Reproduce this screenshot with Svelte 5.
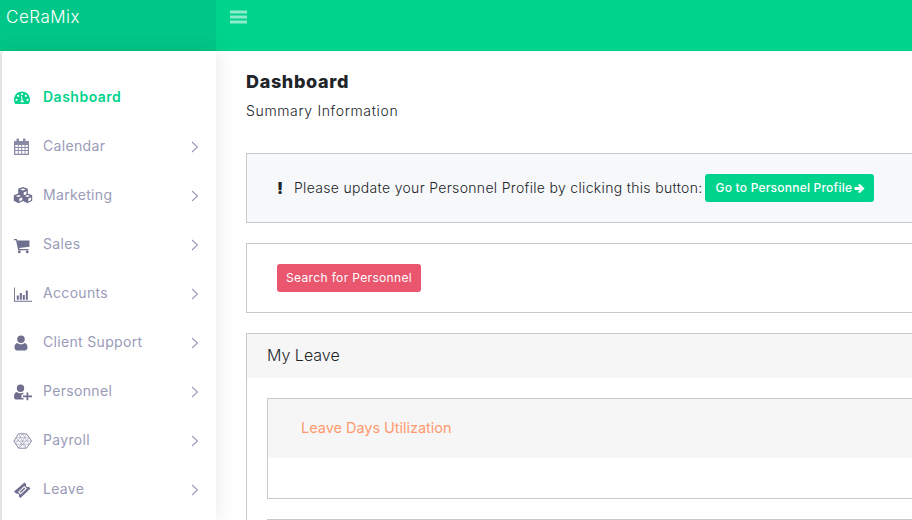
<script>
  const items = [
    { label: 'Calendar', icon: 'calendar' },
    { label: 'Marketing', icon: 'cubes' },
    { label: 'Sales', icon: 'cart' },
    { label: 'Accounts', icon: 'chart' },
    { label: 'Client Support', icon: 'user' },
    { label: 'Personnel', icon: 'userplus' },
    { label: 'Payroll', icon: 'hex' },
    { label: 'Leave', icon: 'ticket' }
  ];
</script>

<div class="page">
  <header class="topbar">
    <div class="brand">CeRaMix</div>
    <div class="toggle">
      <svg width="17" height="14" viewBox="0 0 17 14"><path d="M0 0.5h17v3H0zM0 5.500h17v3H0zM0 10.500h17v3H0z" fill="#fff" fill-opacity=".55"/></svg>
    </div>
  </header>
  <div class="body">
    <aside class="sidebar">
      <nav>
        <a class="item active" href="#dashboard">
          <svg class="ico" viewBox="0 0 20 18"><path fill-rule="evenodd" fill="#00d38c" d="M9 2.500C4.600 2.500 1 6.100 1 10.500c0 1.500.4 2.900 1.100 4.200.2.300.4.300.6.300h12.600c.2 0 .5-.1.600-.3.700-1.300 1.100-2.700 1.100-4.200 0-4.400-3.600-8-8-8zM9 4a1.100 1.100 0 1 1 0 2.200A1.100 1.100 0 0 1 9 4zM5.200 5.800a1.100 1.100 0 1 1 0 2.200 1.100 1.100 0 0 1 0-2.200zm7.600 0a1.100 1.100 0 1 1 0 2.200 1.100 1.100 0 0 1 0-2.200zM3.500 9.700a1.100 1.100 0 1 1 0 2.200 1.100 1.100 0 0 1 0-2.200zm11 0a1.100 1.100 0 1 1 0 2.200 1.100 1.100 0 0 1 0-2.200zM7.900 7.300l.9-.2 1 4.500c.7.300 1.200 1 1.200 1.700H7.200c0-.9.600-1.700 1.500-1.900z"/></svg>
          <span>Dashboard</span>
        </a>
        {#each items as item}
          <a class="item" href="#{item.icon}">
            <svg class="ico" class:soft={item.icon === 'calendar'} viewBox="0 0 20 18">
              {#if item.icon === 'calendar'}
                <path fill-rule="evenodd" d="M1 3h2.500V1c0-.8 2.500-.8 2.500 0v2h4V1c0-.8 2.500-.8 2.500 0v2H16v14H1zM2.300 7v2h2.500V7zm3.400 0v2h2.500V7zm3.400 0v2h2.500V7zm3.400 0v2h2.300V7zM2.300 10v2h2.500v-2zm3.400 0v2h2.500v-2zm3.400 0v2h2.500v-2zm3.400 0v2h2.300v-2zM2.300 13v2.700h2.500V13zm3.400 0v2.700h2.500V13zm3.400 0v2.700h2.500V13zm3.400 0v2.700h2.300V13z"/>
              {:else if item.icon === 'cubes'}
                <path fill-rule="evenodd" d="M10 0l4.800 1.800v4.700l4.400 1.700v5.600L14.500 16.200 10 14l-4.500 2.200L.8 13.800V8.200l4.400-1.700V1.800zM10 1.600L7.300 2.600 10 3.600l2.700-1zM5.500 8l-2.700 1 2.700 1 2.700-1zm9 0l-2.700 1 2.700 1 2.700-1zM6.300 11.500v3l3-1.500v-2.600zm9 0v3l2.800-1.400v-2.700zM10.700 5.300v3l2.800-1.100V4.200z"/>
              {:else if item.icon === 'cart'}
                <path fill-rule="evenodd" d="M1 3h2.800l.5 1.500H16.500V10.700L6.300 12l.2 1H15.500v1.300H5.200L3 4.300H1zM6.300 14.500a1.400 1.400 0 1 1 0 2.800 1.400 1.400 0 0 1 0-2.800zm8 0a1.400 1.400 0 1 1 0 2.800 1.400 1.400 0 0 1 0-2.800z"/>
              {:else if item.icon === 'chart'}
                <path d="M1 2.500h.9v13.300H19v1H1zM3.800 10.500h2v4.300h-2zM6.800 8h2v6.800h-2zM9.800 10h2v4.800h-2zM12.800 5.500h2v9.300h-2z"/>
              {:else if item.icon === 'user'}
                <path d="M8 1.500a3.800 3.800 0 1 1 0 7.600 3.800 3.800 0 0 1 0-7.600zM4.300 9c1 .9 2.300 1.300 3.700 1.300s2.700-.4 3.700-1.300c1.800.3 2.800 2 2.800 4.600 0 1.600-1 2.900-2.500 2.900H4c-1.500 0-2.500-1.300-2.500-2.900C1.500 11 2.500 9.300 4.300 9z"/>
              {:else if item.icon === 'userplus'}
                <path d="M7.500 1.500a3.700 3.700 0 1 1 0 7.400 3.700 3.700 0 0 1 0-7.400zM3.800 9c1 .8 2.300 1.200 3.700 1.200 1 0 2-.2 2.800-.6v1.900H8.500v3.500h2v1.500H3c-1.300 0-2-.9-2-2.200C1 11.600 1.800 9.300 3.800 9zM13.500 9.500h1.800v3H19v1.800h-3.700v3h-1.800v-3H10v-1.800h3.500z"/>
              {:else if item.icon === 'hex'}
                <g fill="none" stroke="currentColor"><path stroke-width="1" d="M5.500 1.800h8L18.500 9l-5 7.200h-8L.9 9z"/><path stroke-width=".5" d="M5.500 1.800l8 14.400M13.500 1.800l-8 14.400M1 9h17.500M3 6l10 10M16 6L6 16M9.500 1.800l6.500 10M9.500 1.800L3 11.800M3 12.300h13M3 5.700h13"/></g>
              {:else if item.icon === 'ticket'}
                <path fill-rule="evenodd" d="M11.500 1.500l1.800 1.800c-.5.700-.4 1.600.2 2.200s1.500.7 2.200.2L17.500 7.500 7.500 17 5.700 15.200c.5-.7.400-1.600-.2-2.200s-1.500-.7-2.200-.2L1 10.500zM11.300 5L5 11.100l2.600 2.500 6.300-6.100zM11.300 6.500l1.100 1-4.800 4.600-1.100-1z"/>
              {/if}
            </svg>
            <span>{item.label}</span>
            <svg class="chev" width="8" height="12" viewBox="0 0 8 12"><path d="M1 1l5.500 5L1 11" fill="none" stroke="#9a9bb8" stroke-width="1.100"/></svg>
          </a>
        {/each}
      </nav>
    </aside>
    <main class="content">
      <h1>Dashboard</h1>
      <p class="sub">Summary Information</p>
      <section class="card notice">
        <b class="bang">!</b>
        <span class="msg">Please update your Personnel Profile by clicking this button:</span>
        <button class="btn green"><span class="lbl">Go to Personnel Profile</span> <svg width="11" height="11" viewBox="0 0 11 11"><path d="M5.500.7L10.600 5.500 5.500 10.300 4 8.800 6 6.900H.6V4.100H6L4 2.200z" fill="#fff"/></svg></button>
      </section>
      <section class="card search">
        <button class="btn red"><span class="lbl">Search for Personnel</span></button>
      </section>
      <section class="card leave">
        <div class="leave-head">My Leave</div>
        <div class="leave-body">
          <div class="inner">
            <div class="inner-head">Leave Days Utilization</div>
            <div class="inner-body"></div>
          </div>
          <div class="inner next"></div>
        </div>
      </section>
    </main>
  </div>
</div>

<style>
  :global(body) { margin: 0; background: #fff; overflow: hidden; }
  .page { width: 912px; height: 520px; overflow: hidden; font-family: Inter, "Open Sans", sans-serif; color: #212529; }
  .topbar { display: flex; height: 51px; background: #00d38c; }
  .brand { width: 216px; box-sizing: border-box; padding: 6px 0 0 6px; background: #00c787; color: #fff; font-size: 17px; line-height: 22px; font-weight: 300; letter-spacing: .5px; }
  .toggle { padding: 10px 0 0 14px; line-height: 0; }
  .body { display: flex; height: 469px; }
  .sidebar { width: 216px; flex: none; box-sizing: border-box; border-left: 2px solid #e3e3e3; border-top-left-radius: 4px; background: #fff; box-shadow: 0 0 22px rgba(0,0,0,.1); position: relative; padding-top: 22px; }
  .item { display: flex; align-items: center; height: 49px; padding: 0 17px 0 11px; text-decoration: none; color: #9a9bb8; font-size: 14px; font-weight: 400; letter-spacing: .33px; }
  .item span { margin-left: 10px; flex: 1; padding-bottom: 2px; }
  .item.active { color: #00d38c; font-weight: 600; letter-spacing: .5px; }
  .ico { width: 20px; height: 18px; flex: none; fill: #6f6f8f; color: #8b8ba8; }
  .ico.soft { fill: #8a8aa6; }
  .chev { flex: none; }
  .content { flex: 1; min-width: 0; padding: 20px 0 0 30px; overflow: hidden; }
  h1 { margin: 0; font-size: 18px; line-height: 22px; font-weight: 800; letter-spacing: .65px; color: #212529; }
  .sub { margin: 8px 0 0; font-size: 14px; line-height: 20px; font-weight: 300; letter-spacing: .65px; }
  .card { width: 900px; box-sizing: border-box; border: 1px solid #c9c9c9; }
  .notice { margin-top: 32px; height: 70px; background: #f7f8fa; display: flex; align-items: center; padding-left: 30px; font-size: 14px; font-weight: 300; letter-spacing: .32px; color: #212529; }
  .msg { margin-left: 1px; padding-bottom: 2px; }
  .bang { width: 16px; font-size: 16px; font-weight: 900; color: #212529; }
  .btn { border: 0; color: #fff; font: inherit; font-size: 12px; border-radius: 3px; height: 28px; padding: 0 9px; letter-spacing: .22px; display: inline-flex; align-items: center; gap: 2px; white-space: nowrap; }
  .lbl { padding-bottom: 2px; }
  .green { background: #00d38c; margin-left: 3px; font-weight: 500; padding: 0 9px 0 10px; }
  .red { background: #e9566e; font-weight: 400; letter-spacing: .35px; }
  .search { margin-top: 20px; height: 70px; padding: 20px 0 0 30px; }
  .leave { margin-top: 20px; height: 300px; }
  .leave-head { height: 44px; background: #f6f6f6; padding-left: 20px; font-size: 16px; font-weight: 300; line-height: 42px; }
  .leave-body { padding: 20px 0 0 20px; }
  .inner { border: 1px solid #c9c9c9; }
  .inner-head { height: 59px; background: #f6f6f6; padding-left: 33px; color: #ff9a6e; font-size: 14.5px; line-height: 57px; letter-spacing: -.03px; }
  .inner-body { height: 40px; }
  .next { margin-top: 20px; height: 40px; }
</style>
